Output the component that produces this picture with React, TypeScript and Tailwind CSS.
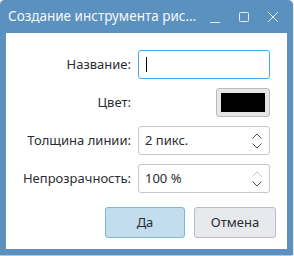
const Chevron = ({ up, dim }: { up?: boolean; dim?: boolean }) => (
  <svg width="10" height="6" viewBox="0 0 10 6" className={dim ? 'text-[#c3c5c7]' : 'text-[#4f5357]'}>
    <path
      d={up ? 'M0.5 5.5 L5 1 L9.5 5.5' : 'M0.5 0.5 L5 5 L9.5 0.5'}
      fill="none"
      stroke="currentColor"
      strokeWidth="1"
    />
  </svg>
)

const SpinBox = ({ value, upDisabled }: { value: string; upDisabled?: boolean }) => (
  <div className="flex h-[29px] items-center justify-between rounded-[3px] border border-[#c6c8ca] bg-white pl-[6px] pr-[7px]">
    <span>{value}</span>
    <div className="flex flex-col gap-[4px]">
      <Chevron up dim={upDisabled} />
      <Chevron />
    </div>
  </div>
)

const App = () => {
  return (
    <div
      className="h-[256px] w-[294px] bg-[#eff0f1] text-[13px] text-[#2a2e32]"
      style={{ fontFamily: '"Noto Sans", "Open Sans", sans-serif' }}
    >
      <div className="flex h-[255px] w-[293px] flex-col rounded-t-[5px] bg-[#5b91be] px-[6px] pb-[6px] shadow-[-1px_1px_2px_rgba(0,0,0,0.25)]">
        <div className="flex h-[33px] shrink-0 items-center justify-between pl-[2px] pr-[8px] text-[#f4f7fa]">
          <span className="text-[13.5px]">Создание инструмента рис…</span>
          <div className="flex items-center">
            <svg width="12" height="12" viewBox="0 0 12 12" className="mt-[2px]">
              <path d="M1 10.5 H11" stroke="#e6eef5" strokeWidth="1" />
            </svg>
            <svg width="12" height="12" viewBox="0 0 12 12" className="ml-[17px]">
              <rect x="1.5" y="1.5" width="9" height="9" rx="1" fill="none" stroke="#e6eef5" strokeWidth="1" />
            </svg>
            <svg width="12" height="12" viewBox="0 0 12 12" className="ml-[17px]">
              <path d="M1 1 L11 11 M11 1 L1 11" stroke="#e6eef5" strokeWidth="1" />
            </svg>
          </div>
        </div>
        <div className="flex flex-1 flex-col bg-white pl-[16px] pr-[11px] pt-[17px]">
          <div className="grid grid-cols-[1fr_132px] items-center gap-x-[7px] gap-y-[9px] pr-[6px]">
            <span className="justify-self-end">Название:</span>
            <div className="flex h-[29px] items-center rounded-[3px] border border-[#3daee9] bg-white pl-[7px]">
              <div className="h-[15px] w-px bg-black" />
            </div>

            <span className="justify-self-end">Цвет:</span>
            <div className="h-[29px] w-[54px] justify-self-end rounded-[3px] border border-[#b9bbbe] bg-[#e4e6e8] p-[4px]">
              <div className="h-full w-full bg-black" />
            </div>

            <span className="justify-self-end">Толщина линии:</span>
            <SpinBox value="2 пикс." />

            <span className="justify-self-end">Непрозрачность:</span>
            <SpinBox value="100 %" upDisabled />
          </div>
          <div className="mt-[14px] flex justify-end gap-[9px]">
            <button className="h-[31px] w-[80px] rounded-[3px] border border-[#7ab7de] bg-[#c3ddef]">
              Да
            </button>
            <button className="h-[31px] w-[82px] rounded-[3px] border border-[#babcbf] bg-[#e8e9ec]">
              Отмена
            </button>
          </div>
        </div>
      </div>
    </div>
  )
}

export default App
